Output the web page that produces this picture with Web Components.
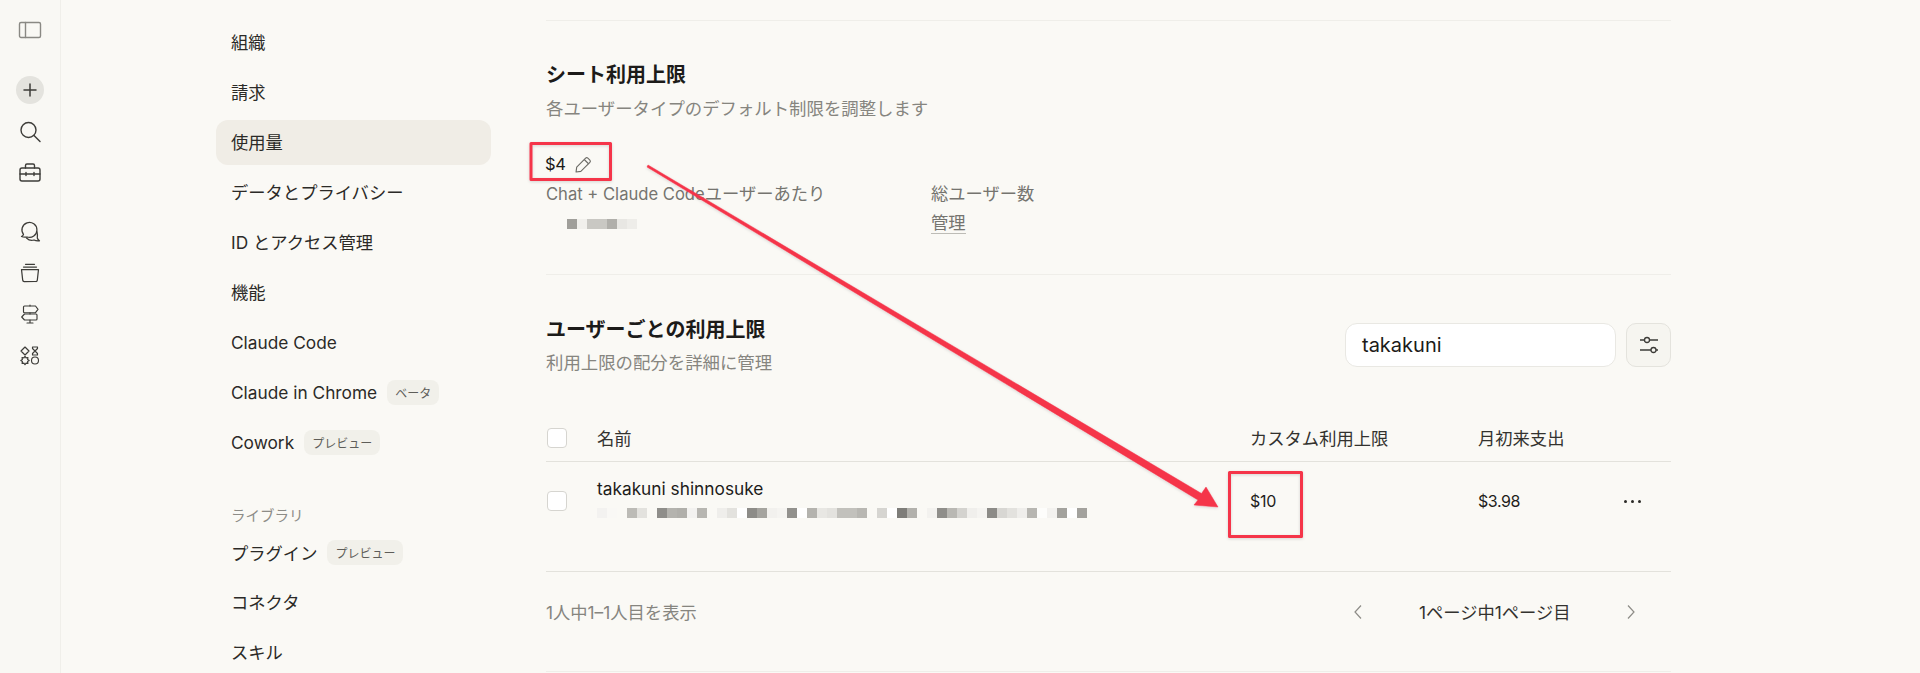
<!DOCTYPE html>
<html lang="ja"><head><meta charset="utf-8">
<style>
html,body{margin:0;height:673px;overflow:hidden;background:#faf9f5;font-family:Inter,"Noto Sans CJK JP",sans-serif;color:#1f1e1b}
body{display:flex;position:relative}
</style></head><body>
<app-rail></app-rail>
<settings-nav>
  <nav-item>組織</nav-item>
  <nav-item>請求</nav-item>
  <nav-item active>使用量</nav-item>
  <nav-item>データとプライバシー</nav-item>
  <nav-item>ID とアクセス管理</nav-item>
  <nav-item>機能</nav-item>
  <nav-item latin>Claude Code</nav-item>
  <nav-item latin badge="ベータ">Claude in Chrome</nav-item>
  <nav-item latin badge="プレビュー">Cowork</nav-item>
  <nav-label>ライブラリ</nav-label>
  <nav-item latin badge="プレビュー">プラグイン</nav-item>
  <nav-item>コネクタ</nav-item>
  <nav-item>スキル</nav-item>
</settings-nav>
<main-panel>
  <seat-section></seat-section>
  <user-section></user-section>
</main-panel>
<annotation-layer></annotation-layer>
<script>
const def=(n,html)=>{customElements.define(n,class extends HTMLElement{
  connectedCallback(){if(this.shadowRoot)return;const r=this.attachShadow({mode:'open'});r.innerHTML=typeof html==='function'?html(this):html;}
});};
const ic=(d,w=1.4)=>`<svg width="24" height="24" viewBox="0 0 24 24" fill="none" stroke="#3d3c38" stroke-width="${w}" stroke-linecap="round" stroke-linejoin="round">${d}</svg>`;
def('app-rail',`<style>
:host{display:flex;flex-direction:column;align-items:center;width:60px;flex:none;height:673px;border-right:1px solid #f0efea;background:#f9f8f4}
.b{width:28px;height:28px;display:grid;place-items:center;margin-top:14px}
.plus{background:#e4e3de;border-radius:50%}
</style>
<div class="b" style="margin-top:16px">${ic('<rect x="1.500" y="4.500" width="21" height="15" rx="1.500" stroke="#8a8984"/><path d="M7.500 4.500v15" stroke="#8a8984"/>')}</div>
<div class="b plus" style="margin-top:32px">${ic('<path d="M12 6v12M6 12h12" stroke-width="1.500"/>')}</div>
<div class="b" style="margin-top:14px">${ic('<circle cx="10.500" cy="10" r="7.500"/><path d="M16 15.500l6 6"/>')}</div>
<div class="b" style="margin-top:12px">${ic('<rect x="2" y="8" width="20" height="13" rx="2"/><path d="M7.500 8V5.500A1.500 1.500 0 0 1 9 4h6a1.500 1.500 0 0 1 1.500 1.500V8M2 14h20M8 12.500v3M16 12.500v3"/>')}</div>
<div class="b" style="margin-top:32px">${ic('<path d="M5.500 14.500A7.500 7.500 0 1 1 9 17C7.500 17.200 5 17.200 3.500 16.500 4.500 16 5.200 15.300 5.500 14.500Z"/><path d="M19 12C19.500 14 19.500 16.500 19.300 18 19.600 19.200 20.500 20.200 21.500 20.800 19.500 21 17.500 20.800 16 20 13.500 20.800 10.500 20 8.500 18"/>',1.25)}</div>
<div class="b" style="margin-top:13px">${ic('<path d="M7.500 3.300h9M5.500 6h13"/><path d="M3.500 8.500h17l-1.200 10.700a1.500 1.500 0 0 1-1.500 1.300H6.200a1.500 1.500 0 0 1-1.500-1.300z"/>',1.25)}</div>
<div class="b" style="margin-top:13px">${ic('<path d="M12 3v1M12 10.700V12M12 18v3M9 21h6"/><path d="M6.500 4H17.500L20 7.300 17.500 10.700H6.500a1 1 0 0 1-1-1V5a1 1 0 0 1 1-1z"/><path d="M6.500 12H18a1 1 0 0 1 1 1v4a1 1 0 0 1-1 1H6.500L3.700 15z"/>',1.15)}</div>
<div class="b" style="margin-top:14px">${ic('<path d="M7 3l4 4-4 4-4-4z"/><path d="M14.500 3h5v1.500L17 7l2.500 2.500V11h-5V9.500L17 7 14.500 4.500z"/><path d="M7 12.300L8.070 13.910 9.970 13.530 9.590 15.430 11.200 16.500 9.590 17.570 9.970 19.470 8.070 19.090 7 20.700 5.930 19.090 4.030 19.470 4.410 17.570 2.800 16.500 4.410 15.430 4.030 13.530 5.930 13.910z"/><circle cx="17" cy="16.500" r="3.500"/>',1.15)}</div>
`);
def('settings-nav',`<style>
:host{display:flex;flex-direction:column;gap:5px;width:275px;flex:none;margin-left:155px;padding-top:20px}
</style><slot></slot>`);
def('nav-item',h=>{const a=h.hasAttribute('active'),b=h.getAttribute('badge'),l=h.hasAttribute('latin');return `<style>
:host{display:flex;align-items:center;box-sizing:border-box;height:45px;padding:0 0 ${l?0:2}px 15px;border-radius:12px;font-size:17.300px;color:#2b2a27;background:${a?'#f0ede6':'transparent'};flex:none}
.t{white-space:nowrap}
.b{margin-left:10px;background:#f1f0ea;color:#5e5d59;font-size:12px;border-radius:8px;height:25px;display:flex;align-items:center;padding:0 8px;white-space:nowrap}
</style><span class="t"><slot></slot></span>${b?`<span class="b">${b}</span>`:''}`});
def('nav-label',`<style>:host{display:flex;align-items:center;height:22px;padding:0 0 0 15px;margin:34px 0 0;font-size:14.500px;color:#8d8c87}</style><slot></slot>`);
def('main-panel',`<style>:host{display:block;width:1125px;flex:none;margin-left:55px;padding-top:20px}</style><slot></slot>`);
def('redact-bar',h=>{const c=h.getAttribute('colors').split(' '),w=h.getAttribute('w');return `<style>:host{display:flex;height:${h.getAttribute('h')}px}i{display:block;width:${w}px;flex:none}</style>`+c.map(x=>`<i style="background:${x==='-'?'transparent':'#'+x}"></i>`).join('')});
def('seat-section',`<style>
:host{display:block;border-top:1px solid #efeee9;border-bottom:1px solid #efeee9;height:253px}
h2{margin:0;font-size:20px;font-weight:700;line-height:24px;padding-top:42px;color:#1c1b19}
p{margin:10px 0 0;font-size:17.400px;line-height:24px;color:#86857f}
.stats{display:flex;margin-top:29px}
.stat{display:flex;flex-direction:column}
.one{width:385px}
.val{display:flex;align-items:center;gap:10px;height:28px;font-size:16.500px;letter-spacing:-.4px;color:#1c1b19;margin-left:-1px}
.lab{font-size:17.300px;line-height:24px;margin-top:4px;color:#75746f;white-space:nowrap}
.lab b{font-weight:400;font-size:16.600px}
redact-bar{margin:13px 0 0 21px}
.link{font-size:17.300px;line-height:24px;margin-top:5px;color:#75746f;align-self:flex-start;border-bottom:1px solid #bdbcb6;height:22px}
</style>
<h2>シート利用上限</h2>
<p>各ユーザータイプのデフォルト制限を調整します</p>
<div class="stats">
 <div class="stat one"><div class="val">$4 <svg width="17" height="17" viewBox="0 0 16 16" fill="none" stroke="#6b6a65" stroke-width="1.050" stroke-linejoin="round"><path d="M1 15l.6-4.500L10 2a1.500 1.500 0 0 1 2.100 0L14 3.900a1.500 1.500 0 0 1 0 2.100L5.500 14.500z"/><path d="M8.700 3.300l4 4"/></svg></div>
  <div class="lab"><b>Chat + Claude Code</b>ユーザーあたり</div>
  <redact-bar h="10" w="10" colors="a09f9a f1f0ec c9c8c3 c9c8c3 b0afaa e8e7e3 eeede9"></redact-bar></div>
 <div class="stat"><div class="val"></div><div class="lab">総ユーザー数</div><div class="link">管理</div></div>
</div>`);
def('user-section',`<style>
:host{display:block}
.head{display:flex;justify-content:space-between;padding:48px 0 0 0;height:100px}
h2{margin:-5px 0 0;font-size:20px;font-weight:700;line-height:24px;color:#1c1b19}
p{margin:9px 0 0;font-size:17.400px;line-height:24px;color:#86857f}
.tools{display:flex;gap:10px;align-items:flex-start}
.search{width:271px;height:44px;box-sizing:border-box;background:#fff;border:1px solid #e9e8e3;border-radius:12px;display:flex;align-items:center;padding-left:16px;font-size:20px;color:#1c1b19}
.filter{width:45px;height:44px;box-sizing:border-box;border:1px solid #e4e3dd;border-radius:10px;background:#f6f5f0;display:grid;place-items:center}
.row{display:grid;grid-template-columns:50px 653px 228px 1fr;align-items:center;padding-left:1px}
.hdr{height:38px;padding-bottom:4px;border-bottom:1px solid #e3e2dc;font-size:17.300px;color:#33322f;margin-top:-4px}
.hdr>div:not(.cb){padding-bottom:2px}
.cb{width:20px;height:20px;box-sizing:border-box;border:1px solid #d6d5d0;border-radius:4px;background:#fff}
.data{height:110px;border-bottom:1px solid #e3e2dc;align-items:start;font-size:16px;padding-top:29px;box-sizing:border-box}
.name{margin-top:-13px;line-height:22px;font-size:17.300px;color:#1c1b19;white-space:nowrap}
redact-bar{margin-top:8px}
.val{line-height:20px;letter-spacing:-.3px}
.last{display:flex;justify-content:space-between;padding-right:30px;line-height:20px;align-items:center;letter-spacing:-.4px}
.dots{display:flex;gap:4px}.dots i{width:3px;height:3px;border-radius:50%;background:#2b2a27}
.foot{display:flex;align-items:center;box-sizing:border-box;height:100px;padding-bottom:20px;justify-content:space-between;border-bottom:1px solid #efeee9;font-size:17.300px}
.count{color:#86857f}
.pager{display:flex;align-items:center;color:#33322f;margin-right:35px}
.pager span{width:149px;text-align:center;margin:0 58px 0 56px;white-space:nowrap}
</style>
<div class="head"><div><h2>ユーザーごとの利用上限</h2><p>利用上限の配分を詳細に管理</p></div>
 <div class="tools"><div class="search">takakuni</div><div class="filter"><svg width="22" height="22" viewBox="0 0 22 22" fill="none" stroke="#3d3c38" stroke-width="1.300"><path d="M2 6h4.500M11.500 6H20M2 16h11M18 16h2"/><circle cx="9" cy="6" r="2.500"/><circle cx="15.500" cy="16" r="2.500"/></svg></div></div></div>
<div class="row hdr"><div class="cb"></div><div>名前</div><div>カスタム利用上限</div><div>月初来支出</div></div>
<div class="row data"><div class="cb"></div><div><div class="name">takakuni shinnosuke</div><redact-bar h="10" w="10" colors="f3f2f0 f9f8f5 - bcbbb6 e3e2de - 8f8e8a b4b3ae b0afaa f3f2f0 b7b6b1 - efeeeb e3e2de ffffff 8d8c88 a5a49f f2f1ee f5f4f1 92918d ffffff b4b3ae e8e7e3 e3e2de c2c1bc c2c1bc b8b7b2 - d6d5d1 ffffff 7e7d79 b2b1ac - f3f2ef 8f8e8a b9b8b3 d4d3cf f0efec f5f4f1 8c8b87 d8d7d3 e3e2de efeeeb b7b6b1 fdfdfb f3f2ef a3a29d ffffff a3a29d"></redact-bar></div><div class="val">$10</div><div class="last"><span>$3.98</span><span class="dots"><i></i><i></i><i></i></span></div></div>
<div class="foot"><div class="count">1人中1–1人目を表示</div><div class="pager"><svg width="10" height="16" viewBox="0 0 10 16" fill="none" stroke="#8d8c87" stroke-width="1.200"><path d="M8 1.500L2 8l6 6.500"/></svg><span>1ページ中1ページ目</span><svg width="10" height="16" viewBox="0 0 10 16" fill="none" stroke="#8d8c87" stroke-width="1.200"><path d="M2 1.500L8 8l-6 6.500"/></svg></div></div>`);
def('annotation-layer',`<style>
:host{position:absolute;inset:0;pointer-events:none;display:block}
svg{position:absolute;left:0;top:0}
</style>
<svg width="1920" height="673" viewBox="0 0 1920 673" fill="none">
<defs><filter id="s" x="-5%" y="-5%" width="110%" height="110%"><feDropShadow dx="0" dy="1" stdDeviation="1.500" flood-color="#000" flood-opacity=".15"/></filter></defs>
<g filter="url(#s)">
<rect x="531" y="143.500" width="79.500" height="36" stroke="#f5344a" stroke-width="3" stroke-linejoin="round"/>
<rect x="1229.500" y="472.500" width="72" height="64" stroke="#f5344a" stroke-width="3" stroke-linejoin="round"/>
<path d="M648 165L1201.500 493.500 1206 487 1218 507 1194 505 1198 500 647 167Z" fill="#f5344a" stroke="#f5344a" stroke-width=".5" stroke-linejoin="round"/>
</g></svg>`);
</script>
</body></html>
